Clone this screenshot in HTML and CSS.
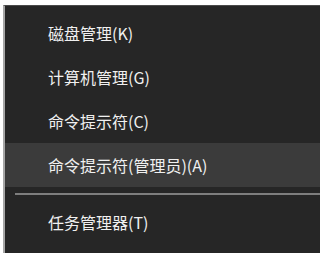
FILE: index.html
```html
<!DOCTYPE html>
<html lang="zh-CN">
<head>
<meta charset="utf-8">
<title>Menu</title>
<link rel="stylesheet" href="styles.css">
</head>
<body>
<div class="menu">
  <div class="item">磁盘管理(K)</div>
  <div class="item">计算机管理(G)</div>
  <div class="item">命令提示符(C)</div>
  <div class="item active">命令提示符(管理员)(A)</div>
  <div class="sep"><div class="line"></div></div>
  <div class="item">任务管理器(T)</div>
</div>
</body>
</html>
```
FILE: styles.css
```css
html, body {
  margin: 0;
  padding: 0;
  background: #ffffff;
  overflow: hidden;
}
.menu {
  margin-top: 5px;
  margin-left: 3px;
  height: 248px;
  box-sizing: border-box;
  overflow: hidden;
  background: #262626;
  border-left: 2px solid #a6a6a6;
  border-top: 1px solid #4a4a4a;
  padding-top: 5px;
  font-family: "Noto Sans CJK SC", "Microsoft YaHei", sans-serif;
  font-size: 16px;
  color: #f0f0f0;
}
.item {
  height: 44px;
  display: flex;
  align-items: center;
  padding-left: 43px;
}
.item.active {
  background: #3b3b3b;
}
.sep {
  height: 13px;
  display: flex;
  align-items: center;
  padding-left: 10px;
}
.line {
  flex: 1;
  height: 2px;
  background: #7e7e7e;
}
```
